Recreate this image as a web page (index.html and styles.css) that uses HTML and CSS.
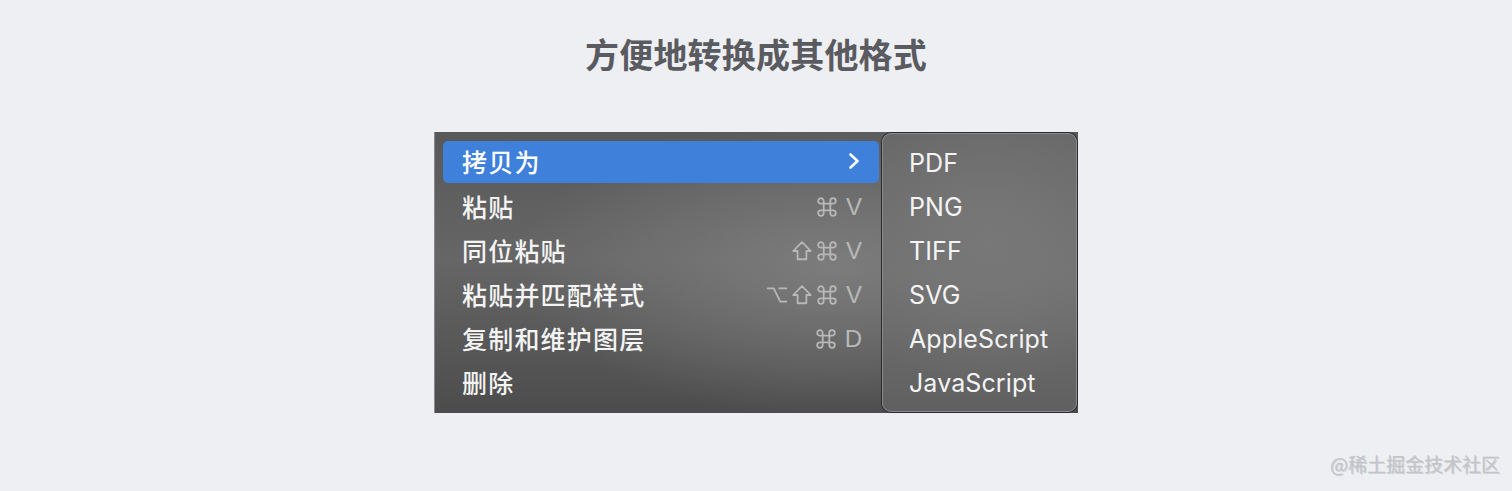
FILE: index.html
```html
<!DOCTYPE html>
<html lang="zh-CN">
<head>
<meta charset="utf-8">
<title>方便地转换成其他格式</title>
<link rel="stylesheet" href="styles.css">
</head>
<body>
<main class="page">
  <h1 class="title">方便地转换成其他格式</h1>
  <div class="shot">
    <div class="menu">
      <div class="row active"><span class="label">拷贝为</span>
        <svg class="chev" width="14" height="18" viewBox="0 0 14 18"><path d="M3.5 2.5 L10.5 9 L3.5 15.5" fill="none" stroke="#fff" stroke-width="2.6" stroke-linecap="round" stroke-linejoin="round"/></svg>
      </div>
      <div class="row"><span class="label">粘贴</span>
        <span class="keys">
          <svg class="k" viewBox="0 0 20 20"><path d="M7 7 V4.5 A2.5 2.5 0 1 0 4.5 7 H15.5 A2.5 2.5 0 1 0 13 4.5 V15.5 A2.5 2.5 0 1 0 15.5 13 H4.5 A2.5 2.5 0 1 0 7 15.5 V7"/></svg><span class="kt">V</span>
        </span>
      </div>
      <div class="row"><span class="label">同位粘贴</span>
        <span class="keys">
          <svg class="k" viewBox="0 0 20 20"><path d="M10 2 L18 10 H14 V17.5 H6 V10 H2 Z" stroke-linejoin="round"/></svg><svg class="k" viewBox="0 0 20 20"><path d="M7 7 V4.5 A2.5 2.5 0 1 0 4.5 7 H15.5 A2.5 2.5 0 1 0 13 4.5 V15.5 A2.5 2.5 0 1 0 15.5 13 H4.5 A2.5 2.5 0 1 0 7 15.5 V7"/></svg><span class="kt">V</span>
        </span>
      </div>
      <div class="row"><span class="label">粘贴并匹配样式</span>
        <span class="keys">
          <svg class="k" viewBox="0 0 20 20"><path d="M1.5 4 H7 L13 16 H18.5 M12 4 H18.5"/></svg><svg class="k" viewBox="0 0 20 20"><path d="M10 2 L18 10 H14 V17.5 H6 V10 H2 Z" stroke-linejoin="round"/></svg><svg class="k" viewBox="0 0 20 20"><path d="M7 7 V4.5 A2.5 2.5 0 1 0 4.5 7 H15.5 A2.5 2.5 0 1 0 13 4.5 V15.5 A2.5 2.5 0 1 0 15.5 13 H4.5 A2.5 2.5 0 1 0 7 15.5 V7"/></svg><span class="kt">V</span>
        </span>
      </div>
      <div class="row"><span class="label">复制和维护图层</span>
        <span class="keys">
          <svg class="k" viewBox="0 0 20 20"><path d="M7 7 V4.5 A2.5 2.5 0 1 0 4.5 7 H15.5 A2.5 2.5 0 1 0 13 4.5 V15.5 A2.5 2.5 0 1 0 15.5 13 H4.5 A2.5 2.5 0 1 0 7 15.5 V7"/></svg><span class="kt">D</span>
        </span>
      </div>
      <div class="row"><span class="label">删除</span></div>
    </div>
    <div class="sub">
      <div class="srow">PDF</div>
      <div class="srow">PNG</div>
      <div class="srow">TIFF</div>
      <div class="srow">SVG</div>
      <div class="srow">AppleScript</div>
      <div class="srow">JavaScript</div>
    </div>
  </div>
  <div class="mark">@稀土掘金技术社区</div>
</main>
</body>
</html>
```

FILE: styles.css
```css
*, *::before, *::after {
  box-sizing: border-box;
}
html, body {
  margin: 0;
  padding: 0;
}
body {
  background: #eeeff3;
  font-family: "Noto Sans CJK SC", "Noto Sans", sans-serif;
}
.page {
  position: relative;
  height: 491px;
  display: flex;
  flex-direction: column;
  align-items: center;
  overflow: hidden;
}
.title {
  margin: 31px 0 0 0;
  height: 46px;
  line-height: 46px;
  font-size: 34px;
  font-weight: 700;
  color: #5a5b60;
  letter-spacing: 0.2px;
}
.shot {
  margin-top: 55px;
  width: 644px;
  height: 281px;
  display: flex;
  background:
    radial-gradient(ellipse 420px 200px at 62% 48%, rgba(128,128,128,0.85), rgba(128,128,128,0) 75%),
    linear-gradient(180deg, #585858 0%, #666 45%, #4c4c4c 100%);
  box-shadow: inset 1px 0 0 #8a8a8a;
}
.menu {
  width: 447px;
  flex: none;
  padding: 9px 2px 0 9px;
  display: flex;
  flex-direction: column;
}
.row {
  height: 44px;
  display: flex;
  align-items: center;
  justify-content: space-between;
  padding: 0 17px 2px 19px;
  color: #f4f4f4;
  font-size: 25px;
  font-weight: 500;
}
.row.active {
  height: 42px;
  margin-bottom: 2px;
  background: #3e80da;
  border-radius: 5px;
  color: #fff;
  padding-right: 18px;
}
.label {
  letter-spacing: 1.2px;
}
.keys {
  display: flex;
  align-items: center;
  gap: 3px;
  padding-top: 2px;
}
.k {
  width: 22px;
  height: 22px;
  fill: none;
  stroke: #b8b8b8;
  stroke-width: 1.6;
  stroke-linecap: round;
}
.kt {
  font-family: "Liberation Sans", "DejaVu Sans", sans-serif;
  font-weight: 400;
  color: #b8b8b8;
  font-size: 24px;
  line-height: 24px;
  margin-left: 5px;
}
.sub {
  flex: none;
  margin: 1px 1px 1px 1px;
  width: 195px;
  border: 1px solid #8b8b8b;
  border-radius: 9px;
  background:
    radial-gradient(ellipse 200px 180px at 55% 40%, #787878, rgba(120,120,120,0) 80%),
    linear-gradient(180deg, #686868 0%, #717171 50%, #606060 100%);
  padding: 7px 0 0 26px;
  display: flex;
  flex-direction: column;
  box-shadow: 0 0 0 1px #2a2a2a;
}
.srow {
  height: 44px;
  display: flex;
  align-items: center;
  font-family: "Inter", "Liberation Sans", sans-serif;
  font-size: 25px;
  color: #f4f4f4;
  letter-spacing: 0.1px;
}
.mark {
  position: absolute;
  right: 12px;
  bottom: 14px;
  font-size: 19px;
  color: #c2c4c8;
  text-shadow: 1px 1px 0 #d0d2d6;
}
```
